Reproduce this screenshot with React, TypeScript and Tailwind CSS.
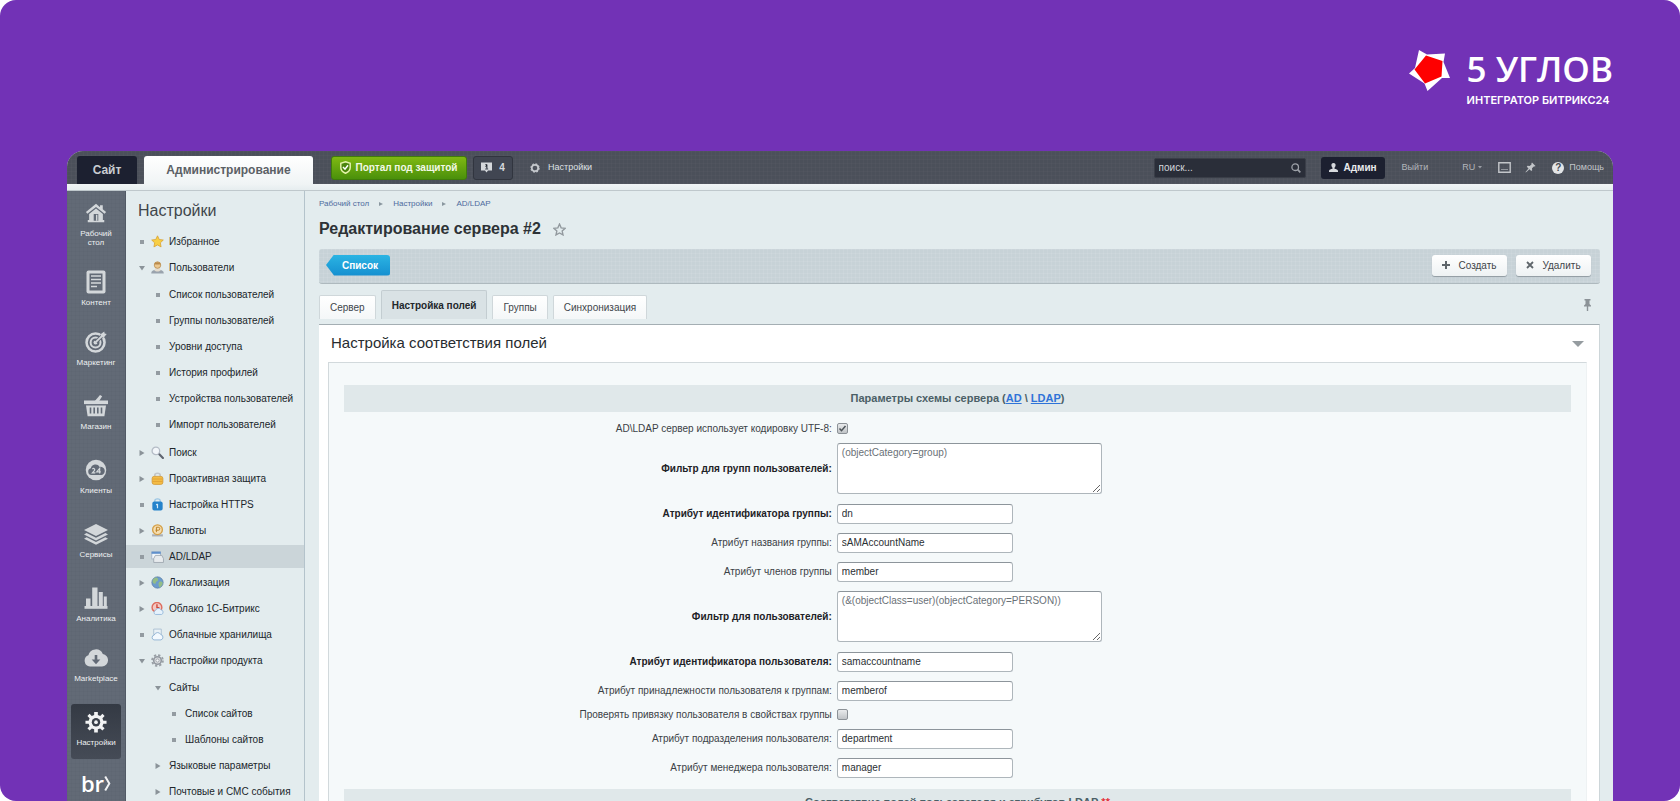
import React, { useState } from 'react';

type Marker = 'dot' | 'open' | 'closed';

interface MenuItem {
  label: string;
  marker: Marker;
  icon?: React.ReactNode;
  active?: boolean;
  children?: MenuItem[];
}

interface RailItem {
  label: string;
  icon: React.ReactNode;
  size: string;
  active?: boolean;
}

interface Field {
  id: string;
  label: string;
  type: 'text' | 'area' | 'check';
  value?: string;
  checked?: boolean;
  required?: boolean;
}

const svg = (size: number, children: React.ReactNode) => (
  <svg width={size} height={size} viewBox="0 0 24 24" fill="none" className="shrink-0" aria-hidden="true">
    {children}
  </svg>
);

// Left rail drawings, all in the same light grey
const G = '#d3d7da';
const R = '#626a76';

const RAIL: RailItem[] = [
  {
    label: 'Рабочий стол',
    size: 'h-[68px]',
    icon: svg(22, <>
      <path d="M12 2 1 11l1.6 1.9L12 5.4l9.4 7.5L23 11l-3.6-3V3.5h-3v2.1z" fill={G} />
      <path d="M4.5 13 12 7.2l7.5 5.8v6.5H21V22H3v-2.5h1.5z" fill={G} />
      <path d="M9.5 13h5v7.5h-5z" fill={R} />
      <path d="M12 14h1.5v6.5H12z" fill={G} />
    </>)
  },
  {
    label: 'Контент',
    size: 'h-[60px]',
    icon: svg(24, <>
      <rect x="2.5" y="0.5" width="19" height="23" rx="2" fill={G} />
      <path d="M5.5 3.5h13v17h-13z" fill={R} />
      <path d="M7 6h10M7 9.500h10M7 13h10M7 16.500h6" stroke={G} strokeWidth="1.6" />
    </>)
  },
  {
    label: 'Маркетинг',
    size: 'h-[60px]',
    icon: svg(22, <>
      <circle cx="11.5" cy="12.5" r="9.8" stroke={G} strokeWidth="2.8" />
      <circle cx="11.5" cy="12.5" r="5.4" stroke={G} strokeWidth="2.2" />
      <circle cx="11.5" cy="12.5" r="2.2" fill={G} />
      <path d="m12 12 8-8" stroke={R} strokeWidth="4" />
      <path d="m11.5 12.5 8-8" stroke={G} strokeWidth="2" />
      <path d="m17 3.5 4-3 .4 2.3 2.3.5-3.2 3.9-3-.5z" fill={G} />
    </>)
  },
  {
    label: 'Магазин',
    size: 'h-16',
    icon: svg(24, <>
      <path d="m10 8 6-7 2.2 1.2L14.5 8z" fill={G} />
      <path d="M0 6.5h24v3.6H0z" fill={G} />
      <path d="M2 11.5h20l-1.6 10.8H3.6z" fill={G} />
      <path d="M6.5 13.5v6M10.2 13.5v6M13.8 13.5v6M17.5 13.5v6" stroke={R} strokeWidth="1.6" />
    </>)
  },
  {
    label: 'Клиенты',
    size: 'h-16',
    icon: svg(22, <>
      <circle cx="12" cy="12" r="11.2" fill={G} />
      <path d="M7 17.5a3.7 3.7 0 0 1-.6-7.3A5.2 5.2 0 0 1 16 8.6a4.5 4.5 0 0 1 2 8.9z" fill={R} />
      <path d="M8 10.8c1.8-1.2 3.4.4 2.2 1.8L8 15.2h3.2M16 15.8v-5.6l-3.2 3.8h4.4" stroke={G} strokeWidth="1.3" />
    </>)
  },
  {
    label: 'Сервисы',
    size: 'h-16',
    icon: svg(24, <>
      <path d="m12 2 12 6-12 6L0 8z" fill={G} />
      <path d="m2.6 11 9.4 4.8 9.4-4.8L24 12.4 12 18.4 0 12.4z" fill={G} />
      <path d="m2.6 15.3 9.4 4.8 9.4-4.8 2.6 1.4-12 6-12-6z" fill={G} />
    </>)
  },
  {
    label: 'Аналитика',
    size: 'h-16',
    icon: svg(24, <>
      <path d="M2 12.500h4.500V21H2zM8.200 1.500h5.300V21H8.200zM14.800 6h4V21h-4zM19.800 10.500h3V21h-3z" fill={G} />
      <path d="M0.5 20h23v2.8H.5z" fill={G} />
    </>)
  },
  {
    label: 'Marketplace',
    size: 'h-[60px]',
    icon: svg(24, <>
      <path d="M6 20.5A5.8 5.8 0 0 1 4.4 9.3 7.6 7.6 0 0 1 18.8 8 6.3 6.3 0 0 1 18 20.5z" fill={G} />
      <path d="M10.7 9h2.6v4.5h3L12 18.3l-4.3-4.8h3z" fill={R} />
    </>)
  },
  {
    label: 'Настройки',
    size: 'h-16',
    active: true,
    icon: svg(22, <>
      <path
        d="M10 1h4v3.4l2.6 1.1L19 3l2.4 2.5L19 8l1 2.5h3.5v3.5H20l-1 2.5 2.4 2.4L19 21.3l-2.5-2.3-2.5 1v3.5h-4V20l-2.5-1L5 21.3l-2.4-2.4L5 16.5 4 14H.5v-3.5H4L5 8 2.6 5.5 5 3l2.4 2.5L10 4.4z"
        fill="#f2f3f4"
      />
      <circle cx="12" cy="12.2" r="4.6" fill="#3a404a" />
      <circle cx="12" cy="12.2" r="2" fill="#f2f3f4" />
    </>)
  }
];

const MENU: MenuItem[] = [
  {
    label: 'Избранное',
    marker: 'dot',
    icon: svg(13, <path d="m12 1.500 3.200 6.800 7.500 1-5.500 5.200 1.400 7.500-6.600-3.700L5.400 22l1.400-7.500L1.300 9.300l7.500-1z" fill="#f8cf45" stroke="#d9a232" strokeWidth="1.5" />)
  },
  {
    label: 'Пользователи',
    marker: 'open',
    icon: svg(13, <>
      <path d="M.500 23c0-5 3-7 11.500-7s11.500 2 11.500 7z" fill="#9aa3ad" />
      <path d="M6 17c3 3 9 3 12 0l-2-4H8z" fill="#e3dccf" />
      <circle cx="12" cy="7.5" r="6" fill="#ecc890" stroke="#b98d50" strokeWidth="1.5" />
      <path d="M6 6c1-5 11-5 12 0-4 .5-8 .5-12 0z" fill="#b98a4c" />
    </>),
    children: [
      { label: 'Список пользователей', marker: 'dot' },
      { label: 'Группы пользователей', marker: 'dot' },
      { label: 'Уровни доступа', marker: 'dot' },
      { label: 'История профилей', marker: 'dot' },
      { label: 'Устройства пользователей', marker: 'dot' },
      { label: 'Импорт пользователей', marker: 'dot' }
    ]
  },
  {
    label: 'Поиск',
    marker: 'closed',
    icon: svg(13, <>
      <path d="m14 14 8 8" stroke="#5f6570" strokeWidth="4" strokeLinecap="round" />
      <circle cx="9" cy="9" r="7" fill="#f2f6fa" stroke="#b4bcc6" strokeWidth="2.4" />
    </>)
  },
  {
    label: 'Проактивная защита',
    marker: 'closed',
    icon: svg(13, <>
      <path d="M7 9V6c0-5 10-5 10 0v3" stroke="#c2c6ca" strokeWidth="3" />
      <rect x="2" y="8" width="20" height="15" rx="4" fill="#f3bb45" stroke="#cf9430" strokeWidth="1.3" />
      <path d="M3 13h18M3 17.500h18" stroke="#df9f33" strokeWidth="1.5" />
    </>)
  },
  {
    label: 'Настройка HTTPS',
    marker: 'dot',
    icon: svg(13, <>
      <path d="M7 8V5c0-4.500 10-4.500 10 0v3" stroke="#9ac5e4" strokeWidth="2.5" />
      <rect x="2.5" y="6.5" width="19" height="16.5" rx="3.5" fill="#2583cb" />
      <path d="M12 11v8M9.500 13l2.500-2" stroke="#d4ebfa" strokeWidth="2.2" />
    </>)
  },
  {
    label: 'Валюты',
    marker: 'closed',
    icon: svg(13, <>
      <path d="M2 19h20v4H2z" fill="#a9afb6" />
      <circle cx="12" cy="10.5" r="9" fill="#f6deb0" stroke="#d4a049" strokeWidth="2.5" />
      <path d="M10 15V6h3.500a2.500 2.500 0 0 1 0 5.500H8.500" stroke="#bb8228" strokeWidth="1.8" />
    </>)
  },
  {
    label: 'AD/LDAP',
    marker: 'dot',
    active: true,
    icon: svg(13, <>
      <rect x="1.5" y="3.5" width="16" height="13" fill="#f3f7fb" stroke="#9fb1c5" strokeWidth="1.5" />
      <path d="M1 3h17v4H1z" fill="#5f8fcb" />
      <path d="M8 10h12l3 6v7H5v-7z" fill="#e7eaed" stroke="#9aa3ad" strokeWidth="1.5" />
    </>)
  },
  {
    label: 'Локализация',
    marker: 'closed',
    icon: svg(13, <>
      <circle cx="12" cy="12" r="10.5" fill="#6c9ccc" stroke="#56789f" strokeWidth="1.2" />
      <path d="M5 5c5-4 8-2 8 2s-4 2-4 5-3 3-6 0c0-3 0-5 2-7zM15 11c4-2 7 0 6.500 3s-3 6-5.500 7c-2-2-3-8-1-10z" fill="#94bd86" />
    </>)
  },
  {
    label: 'Облако 1С-Битрикс',
    marker: 'closed',
    icon: svg(13, <>
      <circle cx="11" cy="10" r="9" fill="#f3c9c3" stroke="#dd6c5e" strokeWidth="2.6" />
      <path d="M11 4v6.500h4.500" stroke="#cf4434" strokeWidth="2.5" />
      <path d="M8 23a4 4 0 0 1 .5-7.500 5.500 5.500 0 0 1 10-1A4.400 4.400 0 0 1 19.500 23z" fill="#e6f2fc" stroke="#8db3d8" strokeWidth="1.5" />
    </>)
  },
  {
    label: 'Облачные хранилища',
    marker: 'dot',
    icon: svg(13, <>
      <path d="M5 2h14v10H5z" fill="#eaf1f6" stroke="#a4bace" strokeWidth="1.5" />
      <path d="M5.500 22a4.600 4.600 0 0 1 .5-9 6.500 6.500 0 0 1 12-1 5.200 5.200 0 0 1 .5 10z" fill="#f3f9fe" stroke="#8fb2d2" strokeWidth="1.7" />
    </>)
  },
  {
    label: 'Настройки продукта',
    marker: 'open',
    icon: svg(13, <>
      <circle cx="12" cy="12" r="10" stroke="#999fa5" strokeWidth="3.4" strokeDasharray="4.200 3.654" />
      <circle cx="12" cy="12" r="7" fill="#dcdfe1" stroke="#9298a0" strokeWidth="3" />
      <circle cx="12" cy="12" r="3" fill="#f3f6f7" stroke="#9298a0" strokeWidth="1.5" />
    </>),
    children: [
      {
        label: 'Сайты',
        marker: 'open',
        children: [
          { label: 'Список сайтов', marker: 'dot' },
          { label: 'Шаблоны сайтов', marker: 'dot' }
        ]
      },
      { label: 'Языковые параметры', marker: 'closed' },
      { label: 'Почтовые и СМС события', marker: 'closed' }
    ]
  }
];

const FIELDS: Field[] = [
  { id: 'utf8', label: 'AD\\LDAP сервер использует кодировку UTF-8:', type: 'check', checked: true },
  { id: 'group_filter', label: 'Фильтр для групп пользователей:', type: 'area', value: '(objectCategory=group)', required: true },
  { id: 'group_id', label: 'Атрибут идентификатора группы:', type: 'text', value: 'dn', required: true },
  { id: 'group_name', label: 'Атрибут названия группы:', type: 'text', value: 'sAMAccountName' },
  { id: 'group_members', label: 'Атрибут членов группы', type: 'text', value: 'member' },
  { id: 'user_filter', label: 'Фильтр для пользователей:', type: 'area', value: '(&(objectClass=user)(objectCategory=PERSON))', required: true },
  { id: 'user_id', label: 'Атрибут идентификатора пользователя:', type: 'text', value: 'samaccountname', required: true },
  { id: 'user_group', label: 'Атрибут принадлежности пользователя к группам:', type: 'text', value: 'memberof' },
  { id: 'user_check', label: 'Проверять привязку пользователя в свойствах группы', type: 'check', checked: false },
  { id: 'user_department', label: 'Атрибут подразделения пользователя:', type: 'text', value: 'department' },
  { id: 'user_manager', label: 'Атрибут менеджера пользователя:', type: 'text', value: 'manager' }
];

const TABS = ['Сервер', 'Настройка полей', 'Группы', 'Синхронизация'];

const DEPTH_PADDING = ['pl-[13px]', 'pl-[29px]', 'pl-[45px]'];

function MarkerIcon({ marker }: { marker: Marker }) {
  if (marker === 'dot') {
    return <span className="h-1 w-1 bg-[#939ba1]" />;
  }
  return (
    <svg width="6" height="6" viewBox="0 0 6 6" aria-hidden="true">
      <path d={marker === 'open' ? 'M0 1h6L3 5.5z' : 'M.5 0 5.5 3 .5 6z'} fill="#8b9399" />
    </svg>
  );
}

function MenuList({ items, depth = 0 }: { items: MenuItem[]; depth?: number }) {
  return (
    <ul className={depth === 1 ? 'pb-0.5 pt-px' : ''}>
      {items.map(item => (
        <li key={item.label}>
          <a
            href="#"
            className={`mb-[3px] flex h-[23px] items-center whitespace-nowrap text-[10px] text-[#20262b] ${DEPTH_PADDING[depth]} ${item.active ? 'bg-[#cbd5d9]' : ''}`}
          >
            <span className="flex w-[6px] shrink-0 justify-center"><MarkerIcon marker={item.marker} /></span>
            {item.icon && <span className="ml-[6px]">{item.icon}</span>}
            <span className={item.icon ? 'ml-[5px]' : 'ml-2'}>{item.label}</span>
          </a>
          {item.children && <MenuList items={item.children} depth={depth + 1} />}
        </li>
      ))}
    </ul>
  );
}

function FieldRow({ field }: { field: Field }) {
  const border = 'rounded-[3px] border border-[#aeb6bb] border-t-[#8d959b] bg-white px-1 text-[10px]';
  return (
    <div className={`grid grid-cols-[2fr_3fr] items-center ${field.type === 'check' ? 'min-h-[19px]' : field.type === 'area' ? 'min-h-[61px]' : 'min-h-[29px]'}`}>
      <label
        htmlFor={field.id}
        className={`pr-[3px] text-right text-[10px] ${field.required ? 'font-bold text-[#1d2226]' : 'text-[#3b4146]'}`}
      >
        {field.label}
      </label>
      <div className="flex items-center pl-[2px]">
        {field.type === 'text' && (
          <input id={field.id} type="text" defaultValue={field.value} className={`h-5 w-44 text-[#2b3034] ${border}`} />
        )}
        {field.type === 'area' && (
          <textarea id={field.id} defaultValue={field.value} className={`h-[51px] w-[265px] resize py-[3px] leading-3 text-[#6a7177] ${border}`} />
        )}
        {field.type === 'check' && (
          <span className="relative flex h-[11px] w-[11px]">
            <input
              id={field.id}
              type="checkbox"
              defaultChecked={field.checked}
              className="peer h-[11px] w-[11px] appearance-none rounded-[2px] border border-[#8c9297] bg-linear-to-b from-[#e9ebec] to-[#c0c4c7]"
            />
            <svg className="pointer-events-none absolute inset-0 hidden peer-checked:block" width="11" height="11" viewBox="0 0 11 11" aria-hidden="true">
              <path d="m2.500 5.500 2 2.200L8.500 3" fill="none" stroke="#4d5459" strokeWidth="1.5" />
            </svg>
          </span>
        )}
      </div>
    </div>
  );
}

function TopBar() {
  return (
    <header className="flex h-[33px] shrink-0 items-end bg-[#4b505a] bg-[linear-gradient(rgba(255,255,255,0.02)_1px,transparent_1px),linear-gradient(90deg,rgba(255,255,255,0.02)_1px,transparent_1px)] bg-[size:4px_4px] pl-[10px] pr-[9px]">
      <a href="#" className="flex h-7 w-[60px] items-center justify-center rounded-t-[3px] bg-[#1c2030] text-[12px] font-bold text-[#c9ccd1]">Сайт</a>
      <a href="#" className="ml-[7px] flex h-7 w-[169px] items-center justify-center rounded-t-[3px] bg-linear-to-b from-white to-[#f0f4f5] text-[12px] font-bold text-[#5b6065]">Администрирование</a>
      <div className="flex flex-1 items-center self-stretch">
        <button className="ml-[18px] flex h-6 w-[136px] items-center justify-center gap-1 whitespace-nowrap rounded-[3px] border border-[#3f7c0b] bg-linear-to-b from-[#7fb912] to-[#4a900b] text-[10px] font-bold text-[#f3f9e6]">
          <svg width="11" height="13" viewBox="0 0 11 13" aria-hidden="true">
            <path d="M5.500.8 10.200 2.200v4.300c0 2.700-2 4.600-4.700 5.800C2.800 11.100.8 9.200.8 6.500V2.200z" fill="#4b850c" stroke="#e3f2a8" strokeWidth="1.5" />
            <path d="m3 6 2 2.200L8 4.300" fill="none" stroke="#fff" strokeWidth="1.5" />
          </svg>
          Портал под защитой
        </button>
        <button className="ml-[6px] flex h-6 w-10 items-center justify-center gap-[7px] rounded-[3px] border border-[#31353f] bg-[#414652] text-[10px] font-bold text-[#d5d8dc]">
          <svg width="11" height="11" viewBox="0 0 11 11" aria-hidden="true">
            <path d="M0 .5h11v8H7L5.500 10.500 4 8.500H0z" fill="#d5d8dc" />
            <path d="M4.500 2.500h1.500v4.500M4.200 7h3M4.400 4.500h1.500" stroke="#414652" />
          </svg>
          4
        </button>
        <a href="#" className="ml-[17px] flex items-center gap-2 text-[9px] text-[#dfe1e4]">
          <svg width="10" height="10" viewBox="0 0 10 10" aria-hidden="true">
            <circle cx="5" cy="5" r="4.1" fill="none" stroke="#c4c7cc" strokeWidth="1.2" strokeDasharray="1.800 1.420" />
            <circle cx="5" cy="5" r="3.2" fill="none" stroke="#c4c7cc" strokeWidth="1.8" />
          </svg>
          Настройки
        </a>
        <label className="ml-auto flex h-5 w-[152px] items-center rounded-[2px] border border-[#3a3e48] bg-[#2a2e39] px-1">
          <input type="text" aria-label="Поиск" placeholder="поиск..." className="min-w-0 flex-1 bg-transparent text-[10px] text-white outline-none placeholder:text-[#d3d5d9]" />
          <svg width="10" height="10" viewBox="0 0 10 10" fill="none" stroke="#9da1a8" aria-hidden="true">
            <circle cx="4.2" cy="4.2" r="3.3" strokeWidth="1.3" />
            <path d="m6.700 6.700 2.600 2.600" strokeWidth="1.7" />
          </svg>
        </label>
        <a href="#" className="ml-[15px] flex h-[22px] w-16 items-center justify-center gap-[6px] rounded-[3px] bg-[#1c2030] text-[10px] font-bold text-[#e8eaec]">
          <svg width="9" height="9" viewBox="0 0 9 9" fill="#d7dade" aria-hidden="true">
            <path d="M4.500 0c1.600 0 2.200 1 2.100 2.300C6.500 3.500 6 4.300 5.500 4.800v.9c1.500.3 3.500.8 3.500 2.300v1H0V8c0-1.500 2-2 3.500-2.300v-.9C3 4.300 2.500 3.500 2.400 2.300 2.300 1 2.900 0 4.500 0z" />
          </svg>
          Админ
        </a>
        <a href="#" className="ml-[17px] text-[9px] text-[#b3b6bb]">Выйти</a>
        <button className="ml-[34px] flex items-center gap-[3px] text-[9px] text-[#b3b6bb]">
          RU
          <svg width="4" height="3" viewBox="0 0 4 3" aria-hidden="true"><path d="M0 0h4L2 2.500z" fill="#9a9ea5" /></svg>
        </button>
        <svg className="ml-[16px]" width="13" height="11" viewBox="0 0 13 11" fill="none" stroke="#c2c5c9" aria-hidden="true">
          <path d="M.8.8h11.400v9.400H.8z" strokeWidth="1.4" />
          <path d="M3 7.500h7" strokeWidth="1.2" strokeOpacity=".6" />
        </svg>
        <svg className="ml-[14px]" width="11" height="11" viewBox="0 0 11 11" aria-hidden="true">
          <path d="M7 .5 10.500 4l-1 .6-.7-.2L7 6.300l.2 2-1 .8L4.500 7.300.8 10.400l-.3-.3L3.500 6.500 1.800 4.800l.8-1 2.100.2L6.600 2.200 6.400 1.500z" fill="#c2c5c9" />
        </svg>
        <a href="#" className="ml-[16px] flex items-center gap-[5px] text-[9px] text-[#c2c5c9]">
          <span className="flex h-3 w-3 items-center justify-center rounded-full bg-[#e3e5e7] text-[10px] font-bold leading-3 text-[#454a54]">?</span>
          Помощь
        </a>
      </div>
    </header>
  );
}

function Rail() {
  return (
    <nav className="w-[59px] shrink-0 border-r border-[#525a66] bg-[#626a76] bg-[linear-gradient(rgba(0,0,0,0.02)_1px,transparent_1px),linear-gradient(90deg,rgba(0,0,0,0.02)_1px,transparent_1px)] bg-[size:4px_4px]">
      {RAIL.map(item => (
        <div key={item.label} className={`flex flex-col items-center justify-end ${item.size}`}>
          <button
            className={`flex min-h-[55px] w-[50px] flex-col items-center rounded-[3px] pb-3 pt-1.5 ${
              item.active ? 'bg-linear-to-b from-[#343a44] to-[#454b56]' : ''
            }`}
          >
            <span className="flex h-6 items-center">{item.icon}</span>
            <span className="mt-1 flex flex-col items-center text-[8px] leading-[9px] text-[#eef0f1]">
              {item.label.split(' ').map(word => <span key={word}>{word}</span>)}
            </span>
          </button>
        </div>
      ))}
      <div className="mt-2.5 flex items-center justify-center text-white">
        <span className="font-['Open_Sans',sans-serif] text-[22px] font-semibold leading-7">br</span>
        <svg width="7" height="17" viewBox="0 0 7 17" aria-hidden="true">
          <path d="M1.200 1.500 5.300 8.500 1.200 15.500" fill="none" stroke="#f1f2f3" strokeWidth="2" />
        </svg>
      </div>
    </nav>
  );
}

function Logo() {
  return (
    <div className="flex items-start gap-4 text-white">
      <svg width="42" height="42" viewBox="0 0 42 42" aria-hidden="true">
        <path d="M10 0 18 4.500 36 3.500 34.500 12 41 28H33L18.500 41 15.500 33.500 0 23.500 6 18z" fill="#fff" />
        <path d="m17 5.500 16.500 5.500-1 15.500L16 33.500 5.500 19.500z" fill="#fe0000" />
      </svg>
      <div>
        <p className="font-['Open_Sans',sans-serif] text-[35px] font-semibold leading-[38px]">5 УГЛОВ</p>
        <p className="mt-[6px] font-[Inter,sans-serif] text-[11px] font-semibold leading-3">ИНТЕГРАТОР БИТРИКС24</p>
      </div>
    </div>
  );
}

function SectionTitle({ children }: { children: React.ReactNode }) {
  return (
    <h3 className="flex h-[27px] items-center justify-center gap-[3px] bg-[#e0e8ea] text-[11px] font-bold text-[#4b5f66]">{children}</h3>
  );
}

export default function App() {
  const [tab, setTab] = useState('Настройка полей');

  return (
    <div className="h-screen bg-white">
      <div className="flex h-full flex-col overflow-hidden rounded-2xl bg-[#7232b6] px-[67px] font-['Liberation_Sans',Arial,sans-serif]">
        <div className="flex h-[151px] shrink-0 justify-end pt-[50px]">
          <Logo />
        </div>

        <div className="flex min-h-0 flex-1 flex-col overflow-hidden rounded-t-2xl bg-[#e3ecee]">
          <TopBar />
          <div className="h-[7px] shrink-0 border-b border-[#bfc8cc] bg-linear-to-b from-[#f0f4f5] to-[#e6edef]" />

          <div className="flex min-h-0 flex-1">
            <Rail />

            {/* Settings menu */}
            <aside className="w-[179px] shrink-0 border-r border-[#b4c3cb]">
              <h2 className="pb-[7px] pl-3 pt-2 text-[16px] leading-6 text-[#3f464b]">Настройки</h2>
              <MenuList items={MENU} />
            </aside>

            <main className="min-w-0 flex-1 pl-[14px] pr-[13px]">
              <nav className="flex items-center pt-[7px] text-[8px] leading-3 text-[#4d6b9d]">
                <a href="#">Рабочий стол</a>
                <svg className="mx-[10px]" width="4" height="4" viewBox="0 0 4 4" aria-hidden="true"><path d="M0 0 4 2 0 4z" fill="#8a979f" /></svg>
                <a href="#">Настройки</a>
                <svg className="mx-[10px]" width="4" height="4" viewBox="0 0 4 4" aria-hidden="true"><path d="M0 0 4 2 0 4z" fill="#8a979f" /></svg>
                <a href="#">AD/LDAP</a>
              </nav>

              <div className="mt-[7px] flex items-center gap-3">
                <h1 className="text-[16px] font-bold leading-6 text-[#2d3236]">Редактирование сервера #2</h1>
                <svg width="13" height="13" viewBox="0 0 24 24" aria-hidden="true">
                  <path d="m12 2 3 7 7.500.7-5.600 5 1.600 7.300L12 18.300 5.500 22l1.600-7.300-5.600-5L9 9z" fill="none" stroke="#92999e" strokeWidth="2.5" />
                </svg>
              </div>

              <div className="mt-[8px] flex h-[35px] items-center rounded-[3px] border-b border-[#aeb9be] bg-[#c7d2d7] bg-[linear-gradient(rgba(255,255,255,0.07)_1px,transparent_1px),linear-gradient(90deg,rgba(255,255,255,0.07)_1px,transparent_1px)] bg-[size:4px_4px] pb-[2px] pl-[7px] pr-[9px]">
                <a
                  href="#"
                  className="flex h-[21px] w-16 items-center justify-center rounded-r-[3px] bg-linear-to-b from-[#2bb4e3] to-[#158fd0] pl-1 text-[10px] font-bold text-white [clip-path:polygon(0_50%,8px_0,100%_0,100%_100%,8px_100%)]"
                >
                  Список
                </a>
                <div className="ml-auto flex gap-[9px]">
                  <button className="flex h-[21px] w-[75px] items-center justify-center gap-2 rounded-[3px] bg-linear-to-b from-white to-[#eef2f3] text-[10px] text-[#3f4549] shadow-[0_1px_1px_#8f9aa0]">
                    <svg width="8" height="8" viewBox="0 0 8 8" aria-hidden="true"><path d="M4 0v8M0 4h8" stroke="#5f666b" strokeWidth="2" /></svg>
                    Создать
                  </button>
                  <button className="flex h-[21px] w-[75px] items-center justify-center gap-2 rounded-[3px] bg-linear-to-b from-white to-[#eef2f3] text-[10px] text-[#3f4549] shadow-[0_1px_1px_#8f9aa0]">
                    <svg width="8" height="8" viewBox="0 0 8 8" aria-hidden="true"><path d="m1 1 6 6M7 1 1 7" stroke="#5f666b" strokeWidth="1.8" /></svg>
                    Удалить
                  </button>
                </div>
              </div>

              {/* Tabs */}
              <div className="mt-[6px] flex h-[29px] items-end gap-[5px]" role="tablist">
                {TABS.map(name => (
                  <button
                    key={name}
                    role="tab"
                    aria-selected={tab === name}
                    onClick={() => setTab(name)}
                    className={`rounded-t-[2px] border border-b-0 px-[10px] text-[10px] ${
                      tab === name
                        ? 'h-[29px] border-[#c3cdd1] bg-[#d9e2e5] font-bold text-[#22272b]'
                        : 'h-6 border-[#cfd7da] bg-linear-to-b from-white to-[#f4f7f8] text-[#3f464b]'
                    }`}
                  >
                    {name}
                  </button>
                ))}
                <svg className="ml-auto mr-[9px] self-center" width="7" height="12" viewBox="0 0 7 12" aria-hidden="true">
                  <path d="M.5 0h6v1.500h-1V5L7 6.500V7.500H4.200V12H2.800V7.500H0V6.500L1.500 5V1.500h-1z" fill="#8b9297" />
                </svg>
              </div>

              <section className="mt-[5px] border-r border-t border-[#a4aeb3] border-r-[#cdd6d9] bg-white pl-[9px] pr-3">
                <div className="flex h-[37px] items-center justify-between px-[3px]">
                  <h2 className="text-[15px] text-[#272c30]">Настройка соответствия полей</h2>
                  <svg width="12" height="6" viewBox="0 0 12 6" aria-hidden="true"><path d="M0 0h12L6 6z" fill="#959ca0" /></svg>
                </div>
                <form className="border border-[#d2d9dc] border-r-[#eef2f3] bg-[#f5f9fa] px-[15px] pb-10 pt-[22px]">
                  <SectionTitle>
                    <span>
                      Параметры схемы сервера (<a href="#" className="text-[#2f73d8] underline">AD</a> \ <a href="#" className="text-[#2f73d8] underline">LDAP</a>)
                    </span>
                  </SectionTitle>
                  <div className="py-[7px]">
                    {FIELDS.map(field => <FieldRow key={field.id} field={field} />)}
                  </div>
                  <SectionTitle>
                    <span>Соответствие полей пользователя и атрибутов LDAP</span>
                    <span className="text-[#e5323b]">**</span>
                  </SectionTitle>
                </form>
              </section>
            </main>
          </div>
        </div>
      </div>
    </div>
  );
}
